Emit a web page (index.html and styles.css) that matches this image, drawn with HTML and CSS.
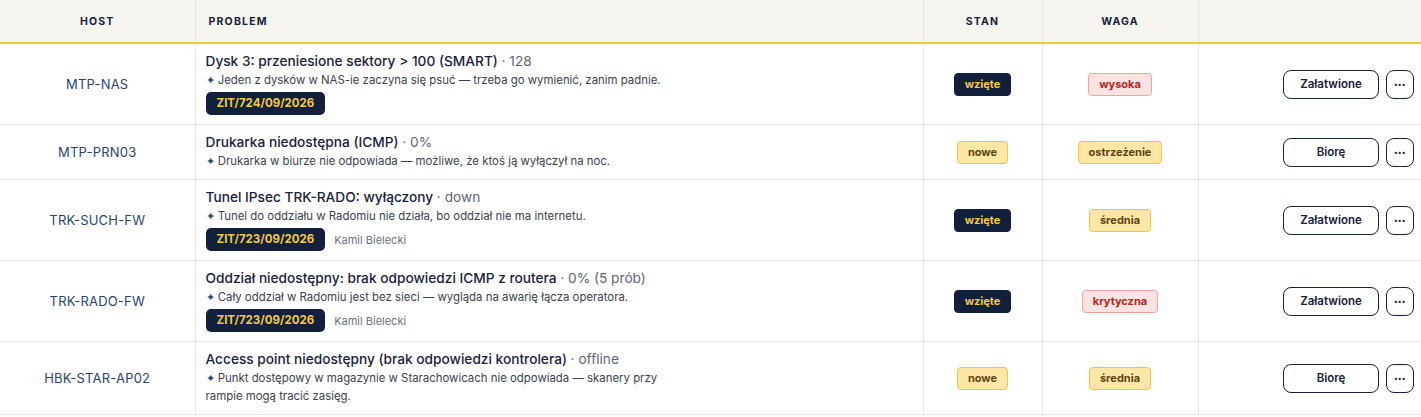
FILE: index.html
```html
<!DOCTYPE html>
<html lang="pl">
<head>
  <meta charset="UTF-8">
  <title>Zgłoszenia</title>
  <link rel="stylesheet" href="styles.css">
</head>
<body>
  <table class="alerts">
    <colgroup>
      <col class="col-host">
      <col class="col-problem">
      <col class="col-stan">
      <col class="col-waga">
      <col class="col-actions">
    </colgroup>
    <thead>
      <tr>
        <th class="center">HOST</th>
        <th>PROBLEM</th>
        <th class="center">STAN</th>
        <th class="center">WAGA</th>
        <th></th>
      </tr>
    </thead>
    <tbody>
      <tr>
        <td class="host">MTP-NAS</td>
        <td class="problem">
          <div class="title">Dysk 3: przeniesione sektory &gt; 100 (SMART) <span class="value">· 128</span></div>
          <div class="note">Jeden z dysków w NAS-ie zaczyna się psuć — trzeba go wymienić, zanim padnie.</div>
          <div class="meta"><span class="ticket">ZIT/724/09/2026</span></div>
        </td>
        <td class="center"><span class="tag tag-taken">wzięte</span></td>
        <td class="center"><span class="tag tag-red">wysoka</span></td>
        <td class="actions"><button class="btn">Załatwione</button><button class="btn btn-more">•••</button></td>
      </tr>
      <tr>
        <td class="host">MTP-PRN03</td>
        <td class="problem">
          <div class="title">Drukarka niedostępna (ICMP) <span class="value">· 0%</span></div>
          <div class="note">Drukarka w biurze nie odpowiada — możliwe, że ktoś ją wyłączył na noc.</div>
        </td>
        <td class="center"><span class="tag tag-yellow">nowe</span></td>
        <td class="center"><span class="tag tag-yellow">ostrzeżenie</span></td>
        <td class="actions"><button class="btn">Biorę</button><button class="btn btn-more">•••</button></td>
      </tr>
      <tr>
        <td class="host">TRK-SUCH-FW</td>
        <td class="problem">
          <div class="title">Tunel IPsec TRK-RADO: wyłączony <span class="value">· down</span></div>
          <div class="note">Tunel do oddziału w Radomiu nie działa, bo oddział nie ma internetu.</div>
          <div class="meta"><span class="ticket">ZIT/723/09/2026</span><span class="owner">Kamil Bielecki</span></div>
        </td>
        <td class="center"><span class="tag tag-taken">wzięte</span></td>
        <td class="center"><span class="tag tag-yellow">średnia</span></td>
        <td class="actions"><button class="btn">Załatwione</button><button class="btn btn-more">•••</button></td>
      </tr>
      <tr>
        <td class="host">TRK-RADO-FW</td>
        <td class="problem">
          <div class="title">Oddział niedostępny: brak odpowiedzi ICMP z routera <span class="value">· 0% (5 prób)</span></div>
          <div class="note">Cały oddział w Radomiu jest bez sieci — wygląda na awarię łącza operatora.</div>
          <div class="meta"><span class="ticket">ZIT/723/09/2026</span><span class="owner">Kamil Bielecki</span></div>
        </td>
        <td class="center"><span class="tag tag-taken">wzięte</span></td>
        <td class="center"><span class="tag tag-red">krytyczna</span></td>
        <td class="actions"><button class="btn">Załatwione</button><button class="btn btn-more">•••</button></td>
      </tr>
      <tr>
        <td class="host">HBK-STAR-AP02</td>
        <td class="problem">
          <div class="title">Access point niedostępny (brak odpowiedzi kontrolera) <span class="value">· offline</span></div>
          <div class="note wrap">Punkt dostępowy w magazynie w Starachowicach nie odpowiada — skanery przy rampie mogą tracić zasięg.</div>
        </td>
        <td class="center"><span class="tag tag-yellow">nowe</span></td>
        <td class="center"><span class="tag tag-yellow">średnia</span></td>
        <td class="actions"><button class="btn">Biorę</button><button class="btn btn-more">•••</button></td>
      </tr>
    </tbody>
  </table>
</body>
</html>
```

FILE: styles.css
```css
* {
  margin: 0;
  padding: 0;
  box-sizing: border-box;
}

body {
  background: #ffffff;
  font-family: 'Inter', 'Noto Sans', sans-serif;
  color: #17223b;
}

.alerts {
  width: 1421px;
  border-collapse: collapse;
  table-layout: fixed;
}

.col-host { width: 195px; }
.col-problem { width: 728px; }
.col-stan { width: 119px; }
.col-waga { width: 156px; }
.col-actions { width: 223px; }

.alerts th,
.alerts td {
  border: 1px solid #e7e5e0;
  vertical-align: middle;
}

.alerts th:first-child,
.alerts td:first-child { border-left: none; }
.alerts th:last-child,
.alerts td:last-child { border-right: none; }

.alerts thead th {
  height: 43px;
  background: #f6f4ee;
  border-top: none;
  border-bottom: 2px solid #efcb3a;
  font-size: 10.5px;
  font-weight: 700;
  letter-spacing: 1.2px;
  text-align: left;
  padding: 0 13px;
  color: #17223b;
}

.alerts th.center,
.alerts td.center {
  text-align: center;
}

.host {
  text-align: center;
  font-size: 13px;
  color: #2a4470;
  letter-spacing: 0.2px;
}

.problem {
  padding: 7px 10px 9px 10px;
}

.title {
  font-size: 13.7px;
  font-weight: 500;
  line-height: 20px;
  color: #17223b;
}

.title .value {
  font-weight: 400;
  color: #5d6678;
}

.note {
  font-size: 11.4px;
  line-height: 18px;
  color: #3b4150;
}

.note::before {
  content: '✦ ';
  color: #2a4470;
}

.note.wrap {
  max-width: 480px;
}

.meta {
  display: flex;
  align-items: center;
  gap: 9px;
  margin-top: 3px;
}

.ticket {
  display: inline-block;
  background: #13203b;
  color: #f3c845;
  font-size: 11.5px;
  font-weight: 700;
  line-height: 23px;
  padding: 0 11px;
  border-radius: 5px;
}

.owner {
  font-size: 11px;
  color: #6b7180;
}

.tag {
  display: inline-block;
  font-size: 11px;
  font-weight: 700;
  line-height: 21px;
  padding: 0 10px;
  border-radius: 4px;
  border: 1px solid transparent;
}

.tag-taken {
  background: #13203b;
  border-color: #13203b;
  color: #f3c845;
}

.tag-yellow {
  background: #fde7a6;
  border-color: #f0c63e;
  color: #5d4410;
}

.tag-red {
  background: #fde3e1;
  border-color: #f1a5a3;
  color: #b3261e;
}

.actions {
  text-align: right;
  padding: 0 7px 0 0;
  white-space: nowrap;
}

.btn {
  display: inline-block;
  min-width: 96px;
  height: 29px;
  padding: 0 12px;
  background: #ffffff;
  border: 1px solid #17223b;
  border-radius: 8px;
  font-family: inherit;
  font-size: 11.5px;
  font-weight: 600;
  color: #17223b;
  vertical-align: middle;
}

.btn-more {
  min-width: 28px;
  width: 28px;
  padding: 0;
  margin-left: 7px;
  font-size: 7px;
  font-weight: 700;
  letter-spacing: 0.5px;
}
```
